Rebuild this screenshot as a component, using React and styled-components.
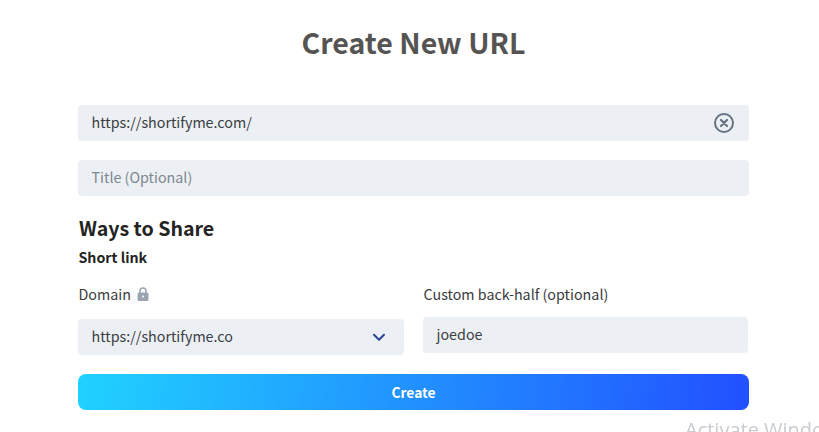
import React from "react";
import styled, { createGlobalStyle } from "styled-components";

const GlobalStyle = createGlobalStyle`
  html, body {
    margin: 0;
    height: 100%;
    overflow: hidden;
    background: #fff;
    font-family: "Noto Sans CJK SC", "Noto Sans", sans-serif;
  }
`;

const CloseCircle = () => (
  <svg width="22" height="22" viewBox="0 0 22 22" fill="none" stroke="#667382">
    <circle cx="11" cy="11" r="9" strokeWidth="2" />
    <path d="M8 8l6 6M14 8l-6 6" strokeWidth="2.2" strokeLinecap="round" />
  </svg>
);

const Lock = () => (
  <svg width="12" height="14" viewBox="0 0 12 14">
    <path d="M3 6V4a3 3 0 0 1 6 0v2" fill="none" stroke="#9aa5b1" strokeWidth="1.6" />
    <rect x="0.5" y="5.5" width="11" height="8.5" rx="1.6" fill="#9aa5b1" />
    <circle cx="6" cy="9.6" r="1.1" fill="#eef1f4" />
  </svg>
);

const Chevron = () => (
  <svg width="14" height="9" viewBox="0 0 14 9" fill="none">
    <path d="M2 1.8l5 5 5-5" stroke="#2b4593" strokeWidth="2" strokeLinecap="round" strokeLinejoin="round" />
  </svg>
);

const App = () => {
  return (
    <>
      <GlobalStyle />
      <Page>
        <Heading>Create New URL</Heading>
        <Field $mb={19}>
          <FieldText>https://shortifyme.com/</FieldText>
          <CloseCircle />
        </Field>
        <Field $mb={0}>
          <FieldText $muted>Title (Optional)</FieldText>
        </Field>
        <SectionTitle>Ways to Share</SectionTitle>
        <SubTitle>Short link</SubTitle>
        <Columns>
          <Column>
            <FieldLabel>
              Domain <Lock />
            </FieldLabel>
            <Field $mt={15} $mb={0}>
              <FieldText>https://shortifyme.co</FieldText>
              <ChevronSlot>
                <Chevron />
              </ChevronSlot>
            </Field>
          </Column>
          <Column>
            <FieldLabel>Custom back-half (optional)</FieldLabel>
            <Field $mt={13} $mb={0}>
              <FieldText>joedoe</FieldText>
            </Field>
          </Column>
        </Columns>
        <CreateButton>Create</CreateButton>
      </Page>
      <Watermark>Activate Windows</Watermark>
    </>
  );
};

export default App;

const Page = styled.main`
  width: 671px;
  margin-left: 78px;
  padding-top: 22px;
`;

const Heading = styled.h1`
  margin: 0 0 43px;
  height: 40px;
  line-height: 40px;
  text-align: center;
  font-size: 28.5px;
  font-weight: 700;
  color: #555453;
`;

const Field = styled.div`
  display: flex;
  align-items: center;
  justify-content: space-between;
  height: 36px;
  margin-top: ${({ $mt }) => $mt || 0}px;
  margin-bottom: ${({ $mb }) => $mb}px;
  padding: 0 14px 0 13.5px;
  background: #ecf0f4;
  border-radius: 4px;
`;

const FieldText = styled.span`
  font-size: 14.3px;
  line-height: 34px;
  height: 36px;
  color: ${({ $muted }) => ($muted ? "#7d8790" : "#3a3d42")};
`;

const ChevronSlot = styled.span`
  display: flex;
  margin-right: 4px;
`;

const SectionTitle = styled.h2`
  margin: 20px 0 0 1px;
  height: 26px;
  line-height: 24px;
  font-size: 19.6px;
  font-weight: 700;
  color: #232323;
`;

const SubTitle = styled.h3`
  margin: 7px 0 0 0.5px;
  height: 20px;
  line-height: 16px;
  font-size: 14.2px;
  font-weight: 700;
  color: #232323;
`;

const Columns = styled.div`
  display: grid;
  grid-template-columns: 326px 325px;
  column-gap: 19px;
  margin-top: 15px;
`;

const Column = styled.div`
  display: flex;
  flex-direction: column;
`;

const FieldLabel = styled.label`
  display: flex;
  align-items: center;
  gap: 6px;
  height: 20px;
  margin-left: 0.5px;
  line-height: 20px;
  font-size: 14.3px;
  color: #3a3a3c;
`;

const CreateButton = styled.button`
  display: block;
  width: 100%;
  height: 36px;
  margin-top: 19px;
  border: 0;
  border-radius: 8px;
  background: linear-gradient(95deg, #20d2ff 0%, #2250ff 100%);
  color: #fff;
  font-family: inherit;
  font-size: 13.8px;
  font-weight: 700;
`;

const Watermark = styled.div`
  position: fixed;
  left: 685px;
  top: 418px;
  font-family: "Open Sans", sans-serif;
  font-size: 20px;
  line-height: 24px;
  white-space: nowrap;
  color: #c9ccd0;
`;
